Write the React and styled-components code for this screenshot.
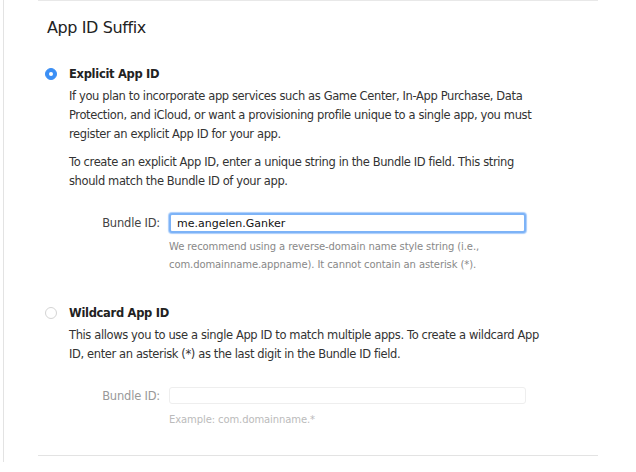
import styled, { createGlobalStyle } from "styled-components";

const GlobalStyle = createGlobalStyle`
  body {
    margin: 0;
    background: #fff;
    font-family: "DejaVu Sans", "Liberation Sans", sans-serif;
    color: #333;
  }
`;

const Page = styled.div`
  margin-left: 3px;
  border-left: 1px solid #e3e3e3;
  height: 462px;
  width: 633px;
`;

const Section = styled.div`
  margin-left: 34px;
  width: 560px;
  border-top: 1px solid #e8e8e8;
  border-bottom: 1px solid #e3e3e3;
  padding: 17px 0 26px 0;
`;

const Title = styled.h2`
  margin: 0 0 27px 9px;
  font-size: 16px;
  font-weight: normal;
  letter-spacing: -0.4px;
  color: #222;
  line-height: 20px;
`;

const Option = styled.div`
  display: flex;
  gap: 12px;
  padding-left: 7px;
  margin-top: ${(p) => p.$top || 0}px;
`;

const Radio = styled.div`
  flex: none;
  width: 12px;
  height: 12px;
  margin-top: 3px;
  border-radius: 50%;
  box-sizing: border-box;
  display: flex;
  align-items: center;
  justify-content: center;
  background: ${(p) => (p.$checked ? "#3b8ff5" : "#fff")};
  border: 1px solid ${(p) => (p.$checked ? "#3b8ff5" : "#d4d4d4")};
  &::after {
    content: "";
    display: ${(p) => (p.$checked ? "block" : "none")};
    width: 4px;
    height: 4px;
    border-radius: 50%;
    background: #fff;
  }
`;

const Body = styled.div`
  flex: 1;
  padding-right: 10px;
`;

const OptionTitle = styled.div`
  font-weight: bold;
  font-size: 11.5px;
  letter-spacing: -0.3px;
  line-height: 18px;
  margin-bottom: 4px;
  color: #222;
`;

const Text = styled.p`
  margin: 0 0 9px 0;
  font-size: 11.5px;
  line-height: 19px;
  letter-spacing: -0.38px;
  color: #333;
  &:last-child {
    margin-bottom: 0;
  }
`;

const Field = styled.div`
  display: grid;
  grid-template-columns: 122px 357px;
  column-gap: 9px;
  align-items: center;
  margin-top: ${(p) => p.$top}px;
`;

const Label = styled.label`
  text-align: right;
  font-size: 11.5px;
  letter-spacing: -0.2px;
  color: ${(p) => (p.$disabled ? "#999" : "#444")};
`;

const Input = styled.input`
  box-sizing: border-box;
  height: ${(p) => (p.$disabled ? 17 : 20)}px;
  width: 100%;
  padding: 0 6px;
  font-family: inherit;
  font-size: 11px;
  color: #111;
  border-radius: 3px;
  outline: none;
  border: ${(p) => (p.$disabled ? "1px solid #eee" : "2px solid #7db3f7")};
  box-shadow: ${(p) => (p.$disabled ? "none" : "0 0 1px 1px #a9cdfb")};
  background: #fff;
`;

const Hint = styled.div`
  grid-column: 2;
  margin-top: ${(p) => p.$top || 5}px;
  font-size: 10px;
  line-height: 18px;
  letter-spacing: -0.1px;
  color: ${(p) => (p.$light ? "#bbb" : "#888")};
`;

export default function App() {
  return (
    <Page>
      <GlobalStyle />
      <Section>
        <Title>App ID Suffix</Title>

        <Option>
          <Radio $checked />
          <Body>
            <OptionTitle>Explicit App ID</OptionTitle>
            <Text>
              If you plan to incorporate app services such as Game Center, In-App Purchase, Data
              <br />
              Protection, and iCloud, or want a provisioning profile unique to a single app, you must
              <br />
              register an explicit App ID for your app.
            </Text>
            <Text>
              To create an explicit App ID, enter a unique string in the Bundle ID field. This string
              <br />
              should match the Bundle ID of your app.
            </Text>
          </Body>
        </Option>
        <Field $top={22}>
          <Label>Bundle ID:</Label>
          <Input defaultValue="me.angelen.Ganker" />
          <Hint>
            We recommend using a reverse-domain name style string (i.e.,
            <br />
            com.domainname.appname). It cannot contain an asterisk (*).
          </Hint>
        </Field>

        <Option $top={30}>
          <Radio />
          <Body>
            <OptionTitle>Wildcard App ID</OptionTitle>
            <Text>
              This allows you to use a single App ID to match multiple apps. To create a wildcard App
              <br />
              ID, enter an asterisk (*) as the last digit in the Bundle ID field.
            </Text>
          </Body>
        </Option>
        <Field $top={23}>
          <Label $disabled>Bundle ID:</Label>
          <Input $disabled disabled />
          <Hint $light $top={7}>Example: com.domainname.*</Hint>
        </Field>
      </Section>
    </Page>
  );
}
